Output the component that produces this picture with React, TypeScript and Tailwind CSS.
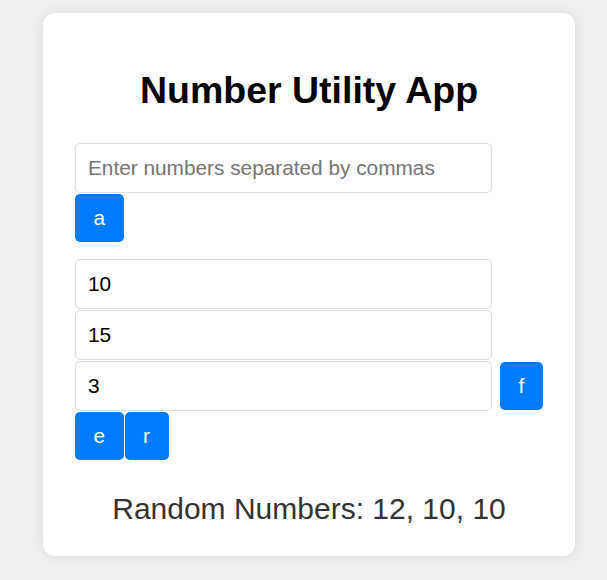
import { useState } from 'react'

const font = { fontFamily: '"Liberation Sans", Arial, sans-serif' }

function Btn({ label }: { label: string }) {
  return (
    <button className="shrink-0 rounded-[5px] bg-[#007bff] px-[18.5px] py-3 text-[20.8px] leading-[normal] text-white">
      {label}
    </button>
  )
}

function Field({ value, placeholder }: { value?: string; placeholder?: string }) {
  const [v, setV] = useState(value ?? '')
  return (
    <input
      value={v}
      placeholder={placeholder}
      onChange={(e) => setV(e.target.value)}
      className="h-[50px] w-[417px] shrink-0 rounded-[5px] border border-[#dddddd] bg-white px-3 text-[20.8px] text-black outline-none placeholder:text-[#757575]"
    />
  )
}

export default function App() {
  return (
    <div className="min-h-[580px] bg-[#f0f0f0] pt-[13px] pl-[43px]" style={font}>
      <div className="flex w-[532px] flex-col rounded-[12px] bg-white px-8 pt-[56px] pb-[30px] shadow-[0_0_12px_rgba(0,0,0,0.1)]">
        <h1 className="text-center text-[37.5px] font-bold leading-[42px] text-black">Number Utility App</h1>

        {/* parse input */}
        <div className="mt-[32px] flex flex-col items-start gap-[1px]">
          <Field placeholder="Enter numbers separated by commas" />
          <Btn label="a" />
        </div>

        {/* values */}
        <div className="mt-[17px] flex flex-col items-start gap-[1px]">
          <Field value="10" />
          <Field value="15" />
          <div className="flex items-center">
            <Field value="3" />
            <div className="ml-[8px]">
              <Btn label="f" />
            </div>
          </div>
          <div className="flex gap-[1px]">
            <Btn label="e" />
            <Btn label="r" />
          </div>
        </div>

        <p className="mt-[32px] text-center text-[30px] leading-[normal] text-[#333333]">
          Random Numbers: 12, 10, 10
        </p>
      </div>
    </div>
  )
}
